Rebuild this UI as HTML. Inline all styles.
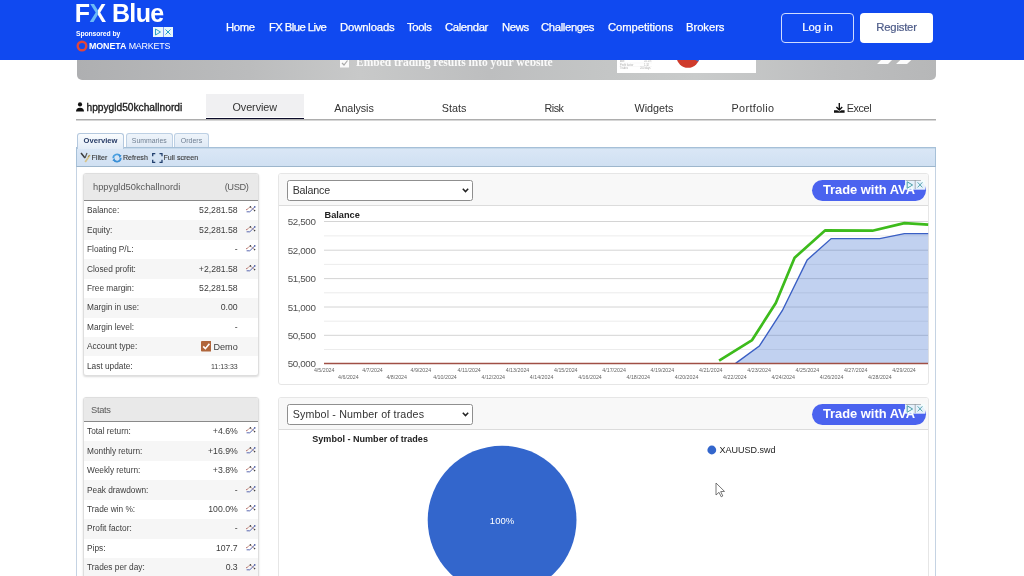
<!DOCTYPE html>
<html><head><meta charset="utf-8">
<style>
*{margin:0;padding:0;box-sizing:border-box}
html,body{width:1024px;height:576px;overflow:hidden;font-family:"Liberation Sans",sans-serif;position:relative}
.a{position:absolute;white-space:nowrap}
#hdr{position:absolute;left:0;top:0;width:1024px;height:60px;background:#1049f0}
.nav{position:absolute;top:19px;color:#fff;font-size:11.3px;line-height:16px;-webkit-text-stroke:0.25px #fff}
.btn{position:absolute;top:13px;height:29.5px;border-radius:4px;font-size:11.3px;line-height:29px;text-align:center;-webkit-text-stroke:0.2px currentColor}
#banner{position:absolute;left:77px;top:40px;width:859px;height:40px;border-radius:0 0 5px 5px;background:linear-gradient(90deg,#aeafb1 0%,#bbbcbd 20%,#c8c9c9 33%,#bdbebf 48%,#c4c6c6 62%,#c9cbcb 72%,#bdbebf 88%,#b6b7b8 100%)}
.tab{position:absolute;top:94px;height:23px;font-size:10.8px;color:#333;line-height:12px;padding-top:7.5px;text-align:center}
#tabline{position:absolute;left:76px;top:119px;width:860px;height:1px;background:#adadad;box-shadow:0 1px 0 #d6d6d6}
#outer{position:absolute;left:76px;top:147px;width:860px;height:440px;border:1px solid #c5d3e3;border-top:none}
#toolbar{position:absolute;left:76px;top:147px;width:860px;height:19.8px;background:linear-gradient(#dae7f6,#d0e0f2);border:1px solid #a6c0d8;border-bottom:1.5px solid #9db6cc;box-shadow:inset 0 1px 0 #c6d9ea}
.stab{position:absolute;top:133px;height:14.5px;border:1px solid #bdd0e4;border-bottom:none;border-radius:3px 3px 0 0;background:linear-gradient(#eef4fa,#dfe9f5);font-size:7px;color:#6f7f92;text-align:center;line-height:14px}
.tb{position:absolute;top:153px;font-size:7.1px;color:#3a3a3a;line-height:10px;z-index:3;-webkit-text-stroke:0.12px #3a3a3a}
.panel{position:absolute;left:83px;width:176px;border:1px solid #dedede;border-radius:3px;box-shadow:0 1px 2px rgba(0,0,0,.15);background:#fff;overflow:hidden}
.ph{height:27px;background:#e9e9e9;border-bottom:1.5px solid #8a8a8a;font-size:9.3px;color:#5a5a5a;position:relative;line-height:11px}
.row{height:19.45px;position:relative;font-size:8.3px;color:#3c3c3c;line-height:10px}
.row:nth-child(odd){background:#f6f6f6}
.row .l{position:absolute;left:3px;top:4.4px}
.row .v{position:absolute;right:20.3px;top:4.4px;font-size:8.7px}
.row .ic{position:absolute;right:2px;top:5.6px}
.cp{position:absolute;left:278.2px;width:650.5px;border:1px solid #e6e6e6;border-radius:3px;background:#fff;overflow:hidden}
.ch{height:31.6px;background:#f8f8f8;border-bottom:1px solid #dcdcdc;position:relative}
.sel{position:absolute;left:7.7px;top:5.9px;width:185.8px;height:20.5px;border:1px solid #8f8f8f;border-radius:2.5px;background:#fff;font-size:10.7px;color:#333;line-height:18.5px;padding-left:4.8px}
.ava{position:absolute;left:532.7px;top:5.5px;width:114px;height:20.8px;border-radius:10.4px;background:#4b63ef;color:#fff;font-weight:bold;font-size:12.9px;line-height:20.8px;padding-left:11px}
.adc{position:absolute;top:0px;height:9px;background:rgba(235,250,255,.85)}
#wrap{position:absolute;left:0;top:0;width:1024px;height:576px;will-change:transform}</style></head><body><div id="wrap">
<div id="banner"></div>
<svg class="a" style="left:0;top:0" width="1024" height="80" viewBox="0 0 1024 80">
<rect x="340" y="58.5" width="9" height="9" fill="#fff" opacity=".9"/><path d="M342 63 L344 65 L347.5 60.5" stroke="#aaa" stroke-width="1.2" fill="none"/>
<text x="356" y="66" font-family="Liberation Serif" font-weight="bold" font-size="11.5" fill="#fff" opacity=".92">Embed trading results into your website</text>
<rect x="617" y="50" width="139" height="23" fill="#fff"/>
<circle cx="688" cy="56.3" r="11.5" fill="#cf3b2c"/><path d="M688 56.3 L688 44.8 A11.5 11.5 0 0 1 698.3 61.4 Z" fill="#3a6fd0"/>
<path d="M877 64 L888 64 L894 58 L883 58 Z M896 64 L907 64 L913.5 58 L902.5 58 Z" fill="#fff" opacity=".95"/>
<g fill="#aaa" font-size="2.6"><text x="620" y="62">Ave</text><text x="620" y="65.6">Profit factor</text><text x="620" y="69.2">Trades</text><text x="644" y="62">+0.1%</text><text x="644" y="65.6">1.32</text><text x="640" y="69.2">200 days</text></g><path d="M619 63 H652 M619 66.6 H652" stroke="#eee" stroke-width=".4"/>
</svg>
<div id="hdr"></div>
<!-- logo -->
<div class="a" id="logo" style="left:74.8px;top:-1px;font-size:25px;font-weight:bold;color:#fff;letter-spacing:-0.6px;line-height:28px">F<span style="background:linear-gradient(90deg,#6cbaf6 52%,#fff 52%);-webkit-background-clip:text;background-clip:text;color:transparent">X</span> Blue</div>
<div class="a" id="spons" style="left:76px;top:30px;font-size:6.8px;letter-spacing:-0.1px;font-weight:bold;color:#fff;line-height:8px">Sponsored by</div>
<svg class="a" style="left:153px;top:27px" width="20" height="10" viewBox="0 0 20 10"><rect x="0" y="0" width="10" height="10" fill="#e8f6fb"/><rect x="10.5" y="0" width="9.5" height="10" fill="#e8f6fb"/><path d="M2.5 2 L7.5 5 L2.5 8 Z" fill="none" stroke="#2aa3c8" stroke-width="1"/><path d="M12.5 2.5 L17.5 7.5 M17.5 2.5 L12.5 7.5" stroke="#2aa3c8" stroke-width="1"/></svg>
<svg class="a" style="left:76px;top:39.5px" width="12" height="12" viewBox="0 0 12 12"><circle cx="6" cy="6" r="4.3" fill="none" stroke="#e0463b" stroke-width="2.4"/></svg>
<div class="a" id="moneta" style="left:89px;top:40.5px;font-size:8.9px;color:#fff;line-height:11px"><b style="letter-spacing:-0.1px">MONETA</b> <span style="letter-spacing:-0.2px">MARKETS</span></div>

<!-- nav -->
<div class="nav" id="n1" style="letter-spacing:-0.33px;left:226px">Home</div>
<div class="nav" id="n2" style="letter-spacing:-0.57px;left:269px">FX Blue Live</div>
<div class="nav" id="n3" style="letter-spacing:-0.14px;left:340px">Downloads</div>
<div class="nav" id="n4" style="letter-spacing:-0.37px;left:407px">Tools</div>
<div class="nav" id="n5" style="letter-spacing:-0.36px;left:445px">Calendar</div>
<div class="nav" id="n6" style="letter-spacing:-0.33px;left:502px">News</div>
<div class="nav" id="n7" style="letter-spacing:-0.35px;left:541px">Challenges</div>
<div class="nav" id="n8" style="letter-spacing:-0.08px;left:608px">Competitions</div>
<div class="nav" id="n9" style="letter-spacing:-0.07px;left:686px">Brokers</div>
<div class="btn" id="login" style="left:781px;width:73px;border:1px solid #cfdcff;color:#fff;line-height:27px;letter-spacing:-0.05px">Log in</div>
<div class="btn" id="reg" style="left:860px;width:73px;background:#fff;color:#4d5b88;letter-spacing:-0.2px">Register</div>

<!-- tabs -->
<svg class="a" style="left:76px;top:102px" width="8" height="10" viewBox="0 0 8 10"><circle cx="4" cy="2.4" r="2.1" fill="#111"/><path d="M0 9.5 Q0 5.7 4 5.7 Q8 5.7 8 9.5 Z" fill="#111"/></svg>
<div class="a" id="uname" style="left:86.5px;top:101.6px;font-size:10.2px;-webkit-text-stroke:0.35px #222;color:#222;line-height:12px">hppygld50kchallnordi</div>
<div class="tab" id="t1" style="left:206px;top:94.3px;width:97.5px;height:22.5px;background:#f0f0f2;padding-top:6.6px;letter-spacing:-0.07px">Overview</div><div class="a" style="left:206px;top:118px;width:97.5px;height:2px;background:#0c0c2a"></div>
<div class="tab" id="t2" style="letter-spacing:-0.1px;left:304px;width:100px">Analysis</div>
<div class="tab" id="t3" style="left:404px;width:100px">Stats</div>
<div class="tab" id="t4" style="letter-spacing:-0.5px;left:504px;width:100px">Risk</div>
<div class="tab" id="t5" style="left:604px;width:100px">Widgets</div>
<div class="tab" id="t6" style="letter-spacing:0.37px;left:703px;width:100px">Portfolio</div>
<div class="tab" id="t7" style="left:803px;width:100px;padding-left:12px;letter-spacing:-0.35px">Excel</div><svg class="a" style="left:833.8px;top:102.8px" width="11" height="10" viewBox="0 0 11 10"><path d="M5.3 0 V6.8 M2.4 4 L5.3 6.9 L8.2 4" stroke="#111" stroke-width="1.4" fill="none"/><path d="M0 7.2 H3.2 L5.3 8.6 L7.4 7.2 H10.6 V9.8 H0 Z" fill="#111"/></svg>
<div id="tabline"></div>

<!-- subtabs + toolbar -->
<div id="outer"></div>
<div class="stab" id="s1" style="left:77px;width:47px;background:linear-gradient(#fafcfe,#e2ecf7);color:#263a66;font-weight:bold;height:15.5px;font-size:7.6px;line-height:14.5px;z-index:2;border-color:#b4c8de">Overview</div>
<div class="stab" id="s2" style="left:125.5px;width:47.5px;font-size:6.9px">Summaries</div>
<div class="stab" id="s3" style="left:174px;width:35px">Orders</div>
<div id="toolbar"></div>
<svg class="a" style="left:80px;top:152px;z-index:3" width="11" height="11" viewBox="0 0 11 11"><path d="M1 1 L5 6" stroke="#3a3a3a" stroke-width="1.5"/><path d="M7 1 L5 6" stroke="#555" stroke-width="1.2"/><path d="M10 3 L5.2 10" stroke="#d8c48a" stroke-width="1.8"/><path d="M9.5 3 L8 5" stroke="#9a8a50" stroke-width="1"/></svg>
<div class="tb" id="tb1" style="left:91.5px">Filter</div>
<svg class="a" style="left:112px;top:153px;z-index:3" width="10" height="10" viewBox="0 0 10 10"><path d="M1.3 5.2 A3.7 3.7 0 0 1 8.2 3.2" stroke="#4a9fe0" stroke-width="1.8" fill="none"/><path d="M8.7 4.8 A3.7 3.7 0 0 1 1.8 6.8" stroke="#3a8fd6" stroke-width="1.8" fill="none"/><path d="M6.3 1.2 L9.6 2.6 L7.6 5 Z M3.7 8.8 L0.4 7.4 L2.4 5 Z" fill="#3a8fd6"/></svg>
<div class="tb" id="tb2" style="left:123px">Refresh</div>
<svg class="a" style="left:151.5px;top:152.8px;z-index:3" width="11" height="10" viewBox="0 0 11 10"><path d="M0.7 3.3 V0.7 H3.3 M7.5 0.7 H10 V3.3 M10 6.7 V9.3 H7.5 M3.3 9.3 H0.7 V6.7" stroke="#22406e" stroke-width="1.3" fill="none"/></svg>
<div class="tb" id="tb3" style="left:163.5px">Full screen</div>

<!-- left panels -->
<div class="panel" style="top:172.9px;height:203.6px">
<div class="ph"><span class="a" style="left:9px;top:8.3px">hppygld50kchallnordi</span><span class="a" style="right:9.5px;top:8.3px;letter-spacing:-0.4px">(USD)</span></div>
<div class="row"><span class="l">Balance:</span><span class="v">52,281.58</span><svg class="ic" width="10" height="8" viewBox="0 0 10 8"><path d="M0.6 3.6 L4.4 0.9 L8.6 4.6" stroke="#c79a8c" stroke-width="0.9" fill="none"/><path d="M0.6 5.8 L3.8 5.8 L8.8 0.9" stroke="#5a68b0" stroke-width="1" fill="none"/><circle cx="4.4" cy="0.9" r=".8" fill="#444"/><circle cx="8.6" cy="4.6" r=".8" fill="#444"/><circle cx="0.8" cy="3.6" r=".6" fill="#a55"/><circle cx="8.8" cy="0.9" r=".8" fill="#4a5aa0"/></svg></div>
<div class="row"><span class="l">Equity:</span><span class="v">52,281.58</span><svg class="ic" width="10" height="8" viewBox="0 0 10 8"><path d="M0.6 3.6 L4.4 0.9 L8.6 4.6" stroke="#c79a8c" stroke-width="0.9" fill="none"/><path d="M0.6 5.8 L3.8 5.8 L8.8 0.9" stroke="#5a68b0" stroke-width="1" fill="none"/><circle cx="4.4" cy="0.9" r=".8" fill="#444"/><circle cx="8.6" cy="4.6" r=".8" fill="#444"/><circle cx="0.8" cy="3.6" r=".6" fill="#a55"/><circle cx="8.8" cy="0.9" r=".8" fill="#4a5aa0"/></svg></div>
<div class="row"><span class="l">Floating P/L:</span><span class="v">-</span><svg class="ic" width="10" height="8" viewBox="0 0 10 8"><path d="M0.6 3.6 L4.4 0.9 L8.6 4.6" stroke="#c79a8c" stroke-width="0.9" fill="none"/><path d="M0.6 5.8 L3.8 5.8 L8.8 0.9" stroke="#5a68b0" stroke-width="1" fill="none"/><circle cx="4.4" cy="0.9" r=".8" fill="#444"/><circle cx="8.6" cy="4.6" r=".8" fill="#444"/><circle cx="0.8" cy="3.6" r=".6" fill="#a55"/><circle cx="8.8" cy="0.9" r=".8" fill="#4a5aa0"/></svg></div>
<div class="row"><span class="l">Closed profit:</span><span class="v">+2,281.58</span><svg class="ic" width="10" height="8" viewBox="0 0 10 8"><path d="M0.6 3.6 L4.4 0.9 L8.6 4.6" stroke="#c79a8c" stroke-width="0.9" fill="none"/><path d="M0.6 5.8 L3.8 5.8 L8.8 0.9" stroke="#5a68b0" stroke-width="1" fill="none"/><circle cx="4.4" cy="0.9" r=".8" fill="#444"/><circle cx="8.6" cy="4.6" r=".8" fill="#444"/><circle cx="0.8" cy="3.6" r=".6" fill="#a55"/><circle cx="8.8" cy="0.9" r=".8" fill="#4a5aa0"/></svg></div>
<div class="row"><span class="l">Free margin:</span><span class="v">52,281.58</span></div>
<div class="row"><span class="l">Margin in use:</span><span class="v">0.00</span></div>
<div class="row"><span class="l">Margin level:</span><span class="v">-</span></div>
<div class="row"><span class="l">Account type:</span><span class="v" style="top:4.5px;font-size:9.1px"><svg width="10.5" height="10.5" viewBox="0 0 11 11" style="vertical-align:-2px;margin-right:2px"><rect x="0" y="0" width="11" height="11" rx="1" fill="#b0663c"/><path d="M2.3 5.6 L4.6 8 L8.8 2.8" stroke="#fff" stroke-width="1.7" fill="none"/></svg>Demo</span></div>
<div class="row"><span class="l">Last update:</span><span class="v" style="font-size:7px;top:6px">11:13:33</span></div>
</div>
<div class="panel" style="top:397.3px;height:200px">
<div class="ph" style="height:23.6px"><span class="a" style="left:7px;top:6.5px;letter-spacing:-0.3px">Stats</span></div>
<div class="row"><span class="l">Total return:</span><span class="v">+4.6%</span><svg class="ic" width="10" height="8" viewBox="0 0 10 8"><path d="M0.6 3.6 L4.4 0.9 L8.6 4.6" stroke="#c79a8c" stroke-width="0.9" fill="none"/><path d="M0.6 5.8 L3.8 5.8 L8.8 0.9" stroke="#5a68b0" stroke-width="1" fill="none"/><circle cx="4.4" cy="0.9" r=".8" fill="#444"/><circle cx="8.6" cy="4.6" r=".8" fill="#444"/><circle cx="0.8" cy="3.6" r=".6" fill="#a55"/><circle cx="8.8" cy="0.9" r=".8" fill="#4a5aa0"/></svg></div>
<div class="row"><span class="l">Monthly return:</span><span class="v">+16.9%</span><svg class="ic" width="10" height="8" viewBox="0 0 10 8"><path d="M0.6 3.6 L4.4 0.9 L8.6 4.6" stroke="#c79a8c" stroke-width="0.9" fill="none"/><path d="M0.6 5.8 L3.8 5.8 L8.8 0.9" stroke="#5a68b0" stroke-width="1" fill="none"/><circle cx="4.4" cy="0.9" r=".8" fill="#444"/><circle cx="8.6" cy="4.6" r=".8" fill="#444"/><circle cx="0.8" cy="3.6" r=".6" fill="#a55"/><circle cx="8.8" cy="0.9" r=".8" fill="#4a5aa0"/></svg></div>
<div class="row"><span class="l">Weekly return:</span><span class="v">+3.8%</span><svg class="ic" width="10" height="8" viewBox="0 0 10 8"><path d="M0.6 3.6 L4.4 0.9 L8.6 4.6" stroke="#c79a8c" stroke-width="0.9" fill="none"/><path d="M0.6 5.8 L3.8 5.8 L8.8 0.9" stroke="#5a68b0" stroke-width="1" fill="none"/><circle cx="4.4" cy="0.9" r=".8" fill="#444"/><circle cx="8.6" cy="4.6" r=".8" fill="#444"/><circle cx="0.8" cy="3.6" r=".6" fill="#a55"/><circle cx="8.8" cy="0.9" r=".8" fill="#4a5aa0"/></svg></div>
<div class="row"><span class="l">Peak drawdown:</span><span class="v">-</span><svg class="ic" width="10" height="8" viewBox="0 0 10 8"><path d="M0.6 3.6 L4.4 0.9 L8.6 4.6" stroke="#c79a8c" stroke-width="0.9" fill="none"/><path d="M0.6 5.8 L3.8 5.8 L8.8 0.9" stroke="#5a68b0" stroke-width="1" fill="none"/><circle cx="4.4" cy="0.9" r=".8" fill="#444"/><circle cx="8.6" cy="4.6" r=".8" fill="#444"/><circle cx="0.8" cy="3.6" r=".6" fill="#a55"/><circle cx="8.8" cy="0.9" r=".8" fill="#4a5aa0"/></svg></div>
<div class="row"><span class="l">Trade win %:</span><span class="v">100.0%</span><svg class="ic" width="10" height="8" viewBox="0 0 10 8"><path d="M0.6 3.6 L4.4 0.9 L8.6 4.6" stroke="#c79a8c" stroke-width="0.9" fill="none"/><path d="M0.6 5.8 L3.8 5.8 L8.8 0.9" stroke="#5a68b0" stroke-width="1" fill="none"/><circle cx="4.4" cy="0.9" r=".8" fill="#444"/><circle cx="8.6" cy="4.6" r=".8" fill="#444"/><circle cx="0.8" cy="3.6" r=".6" fill="#a55"/><circle cx="8.8" cy="0.9" r=".8" fill="#4a5aa0"/></svg></div>
<div class="row"><span class="l">Profit factor:</span><span class="v">-</span><svg class="ic" width="10" height="8" viewBox="0 0 10 8"><path d="M0.6 3.6 L4.4 0.9 L8.6 4.6" stroke="#c79a8c" stroke-width="0.9" fill="none"/><path d="M0.6 5.8 L3.8 5.8 L8.8 0.9" stroke="#5a68b0" stroke-width="1" fill="none"/><circle cx="4.4" cy="0.9" r=".8" fill="#444"/><circle cx="8.6" cy="4.6" r=".8" fill="#444"/><circle cx="0.8" cy="3.6" r=".6" fill="#a55"/><circle cx="8.8" cy="0.9" r=".8" fill="#4a5aa0"/></svg></div>
<div class="row"><span class="l">Pips:</span><span class="v">107.7</span><svg class="ic" width="10" height="8" viewBox="0 0 10 8"><path d="M0.6 3.6 L4.4 0.9 L8.6 4.6" stroke="#c79a8c" stroke-width="0.9" fill="none"/><path d="M0.6 5.8 L3.8 5.8 L8.8 0.9" stroke="#5a68b0" stroke-width="1" fill="none"/><circle cx="4.4" cy="0.9" r=".8" fill="#444"/><circle cx="8.6" cy="4.6" r=".8" fill="#444"/><circle cx="0.8" cy="3.6" r=".6" fill="#a55"/><circle cx="8.8" cy="0.9" r=".8" fill="#4a5aa0"/></svg></div>
<div class="row"><span class="l">Trades per day:</span><span class="v">0.3</span><svg class="ic" width="10" height="8" viewBox="0 0 10 8"><path d="M0.6 3.6 L4.4 0.9 L8.6 4.6" stroke="#c79a8c" stroke-width="0.9" fill="none"/><path d="M0.6 5.8 L3.8 5.8 L8.8 0.9" stroke="#5a68b0" stroke-width="1" fill="none"/><circle cx="4.4" cy="0.9" r=".8" fill="#444"/><circle cx="8.6" cy="4.6" r=".8" fill="#444"/><circle cx="0.8" cy="3.6" r=".6" fill="#a55"/><circle cx="8.8" cy="0.9" r=".8" fill="#4a5aa0"/></svg></div>
<div class="row"><span class="l">Trades per week:</span><span class="v">2.0</span><svg class="ic" width="10" height="8" viewBox="0 0 10 8"><path d="M0.6 3.6 L4.4 0.9 L8.6 4.6" stroke="#c79a8c" stroke-width="0.9" fill="none"/><path d="M0.6 5.8 L3.8 5.8 L8.8 0.9" stroke="#5a68b0" stroke-width="1" fill="none"/><circle cx="4.4" cy="0.9" r=".8" fill="#444"/><circle cx="8.6" cy="4.6" r=".8" fill="#444"/><circle cx="0.8" cy="3.6" r=".6" fill="#a55"/><circle cx="8.8" cy="0.9" r=".8" fill="#4a5aa0"/></svg></div>
</div>

<!-- chart panels -->
<div class="cp" style="top:173.4px;height:211.6px"><div class="ch"><div class="sel" id="sel1" style="letter-spacing:-0.2px">Balance<svg style="position:absolute;right:2.5px;top:7px" width="7" height="5" viewBox="0 0 7 5"><path d="M0.8 0.8 L3.5 3.6 L6.2 0.8" stroke="#222" stroke-width="1.5" fill="none"/></svg></div><div class="ava" id="ava1">Trade with AVA</div></div></div>
<div class="cp" style="top:397.4px;height:200px"><div class="ch"><div class="sel" id="sel2" style="letter-spacing:0.15px">Symbol - Number of trades<svg style="position:absolute;right:2.5px;top:7px" width="7" height="5" viewBox="0 0 7 5"><path d="M0.8 0.8 L3.5 3.6 L6.2 0.8" stroke="#222" stroke-width="1.5" fill="none"/></svg></div><div class="ava" id="ava2">Trade with AVA</div></div></div>
<svg class="a" style="left:0;top:0" width="1024" height="576" viewBox="0 0 1024 576" font-family="Liberation Sans">
<text x="324.5" y="218.2" font-size="9.2" font-weight="bold" fill="#222">Balance</text>
<line x1="324" y1="235.9" x2="928" y2="235.9" stroke="#ececec" stroke-width="1"/>
<line x1="324" y1="264.4" x2="928" y2="264.4" stroke="#ececec" stroke-width="1"/>
<line x1="324" y1="292.8" x2="928" y2="292.8" stroke="#ececec" stroke-width="1"/>
<line x1="324" y1="321.2" x2="928" y2="321.2" stroke="#ececec" stroke-width="1"/>
<line x1="324" y1="349.5" x2="928" y2="349.5" stroke="#ececec" stroke-width="1"/>
<line x1="324" y1="221.5" x2="928" y2="221.5" stroke="#d4d4d4" stroke-width="1"/>
<line x1="324" y1="250.2" x2="928" y2="250.2" stroke="#d4d4d4" stroke-width="1"/>
<line x1="324" y1="278.6" x2="928" y2="278.6" stroke="#d4d4d4" stroke-width="1"/>
<line x1="324" y1="307.0" x2="928" y2="307.0" stroke="#d4d4d4" stroke-width="1"/>
<line x1="324" y1="335.3" x2="928" y2="335.3" stroke="#d4d4d4" stroke-width="1"/>
<text x="315.5" y="225.0" text-anchor="end" font-size="9.8" fill="#505050" letter-spacing="-0.35">52,500</text>
<text x="315.5" y="253.7" text-anchor="end" font-size="9.8" fill="#505050" letter-spacing="-0.35">52,000</text>
<text x="315.5" y="282.1" text-anchor="end" font-size="9.8" fill="#505050" letter-spacing="-0.35">51,500</text>
<text x="315.5" y="310.5" text-anchor="end" font-size="9.8" fill="#505050" letter-spacing="-0.35">51,000</text>
<text x="315.5" y="338.8" text-anchor="end" font-size="9.8" fill="#505050" letter-spacing="-0.35">50,500</text>
<text x="315.5" y="367.0" text-anchor="end" font-size="9.8" fill="#505050" letter-spacing="-0.35">50,000</text>
<text x="324.2" y="372" text-anchor="middle" font-size="5.3" fill="#666">4/5/2024</text>
<text x="348.4" y="378.6" text-anchor="middle" font-size="5.3" fill="#666">4/6/2024</text>
<text x="372.5" y="372" text-anchor="middle" font-size="5.3" fill="#666">4/7/2024</text>
<text x="396.7" y="378.6" text-anchor="middle" font-size="5.3" fill="#666">4/8/2024</text>
<text x="420.8" y="372" text-anchor="middle" font-size="5.3" fill="#666">4/9/2024</text>
<text x="445.0" y="378.6" text-anchor="middle" font-size="5.3" fill="#666">4/10/2024</text>
<text x="469.2" y="372" text-anchor="middle" font-size="5.3" fill="#666">4/11/2024</text>
<text x="493.3" y="378.6" text-anchor="middle" font-size="5.3" fill="#666">4/12/2024</text>
<text x="517.5" y="372" text-anchor="middle" font-size="5.3" fill="#666">4/13/2024</text>
<text x="541.6" y="378.6" text-anchor="middle" font-size="5.3" fill="#666">4/14/2024</text>
<text x="565.8" y="372" text-anchor="middle" font-size="5.3" fill="#666">4/15/2024</text>
<text x="590.0" y="378.6" text-anchor="middle" font-size="5.3" fill="#666">4/16/2024</text>
<text x="614.1" y="372" text-anchor="middle" font-size="5.3" fill="#666">4/17/2024</text>
<text x="638.3" y="378.6" text-anchor="middle" font-size="5.3" fill="#666">4/18/2024</text>
<text x="662.4" y="372" text-anchor="middle" font-size="5.3" fill="#666">4/19/2024</text>
<text x="686.6" y="378.6" text-anchor="middle" font-size="5.3" fill="#666">4/20/2024</text>
<text x="710.8" y="372" text-anchor="middle" font-size="5.3" fill="#666">4/21/2024</text>
<text x="734.9" y="378.6" text-anchor="middle" font-size="5.3" fill="#666">4/22/2024</text>
<text x="759.1" y="372" text-anchor="middle" font-size="5.3" fill="#666">4/23/2024</text>
<text x="783.2" y="378.6" text-anchor="middle" font-size="5.3" fill="#666">4/24/2024</text>
<text x="807.4" y="372" text-anchor="middle" font-size="5.3" fill="#666">4/25/2024</text>
<text x="831.6" y="378.6" text-anchor="middle" font-size="5.3" fill="#666">4/26/2024</text>
<text x="855.7" y="372" text-anchor="middle" font-size="5.3" fill="#666">4/27/2024</text>
<text x="879.9" y="378.6" text-anchor="middle" font-size="5.3" fill="#666">4/28/2024</text>
<text x="904.0" y="372" text-anchor="middle" font-size="5.3" fill="#666">4/29/2024</text>
<polygon points="735.6,363.4 759.3,346.1 782.4,310.5 807.2,260 831.2,238.6 879.7,238.6 904.4,233.6 928.2,233.6 928.2,363.4" fill="#3366cc" fill-opacity="0.3"/>
<polyline points="735.6,363.4 759.3,346.1 782.4,310.5 807.2,260 831.2,238.6 879.7,238.6 904.4,233.6 928.2,233.6" fill="none" stroke="#3a5fc4" stroke-width="1.4"/>
<line x1="324" y1="363.5" x2="928" y2="363.5" stroke="#a04f45" stroke-width="1.3"/>
<polyline points="719.1,360.6 752.1,340.1 775.8,302.9 794.6,257.7 825.3,230.3 872.4,230.7 904.4,223.1 928.2,224.7" fill="none" stroke="#3dbb1c" stroke-width="2.7" stroke-linejoin="round"/>
<text x="312.3" y="442.3" font-size="9.05" font-weight="bold" fill="#222">Symbol - Number of trades</text>
<circle cx="502.1" cy="520.1" r="74.4" fill="#3366cc"/>
<text x="502" y="523.5" text-anchor="middle" font-size="9.5" fill="#fff">100%</text>
<circle cx="711.8" cy="450" r="4.4" fill="#3366cc"/>
<text x="719.5" y="453.2" font-size="9" fill="#222">XAUUSD.swd</text>
<path d="M716 483 L716 495 L719 492.3 L721.2 496.8 L722.8 496 L720.7 491.6 L724.5 491.4 Z" fill="#fff" stroke="#555" stroke-width="0.8"/>
</svg>
<svg class="a" style="left:905.3px;top:180px" width="20" height="10" viewBox="0 0 20 10"><rect x="0" y="0" width="20" height="9.7" fill="#f2fcfd" fill-opacity=".93"/><path d="M0.5 0.4 H16 M10.2 0 V9.2" stroke="#8a8f95" stroke-width=".7"/><path d="M2.2 1.8 L7.6 5 L2.2 8.2 Z" fill="none" stroke="#4c9fa8" stroke-width="1"/><path d="M12.6 2.3 L17.4 7.4 M17.4 2.3 L12.6 7.4" stroke="#4c9fa8" stroke-width="0.9"/></svg>
<svg class="a" style="left:905.3px;top:404px" width="20" height="10" viewBox="0 0 20 10"><rect x="0" y="0" width="20" height="9.7" fill="#f2fcfd" fill-opacity=".93"/><path d="M0.5 0.4 H16 M10.2 0 V9.2" stroke="#8a8f95" stroke-width=".7"/><path d="M2.2 1.8 L7.6 5 L2.2 8.2 Z" fill="none" stroke="#4c9fa8" stroke-width="1"/><path d="M12.6 2.3 L17.4 7.4 M17.4 2.3 L12.6 7.4" stroke="#4c9fa8" stroke-width="0.9"/></svg>
</div></body></html>
